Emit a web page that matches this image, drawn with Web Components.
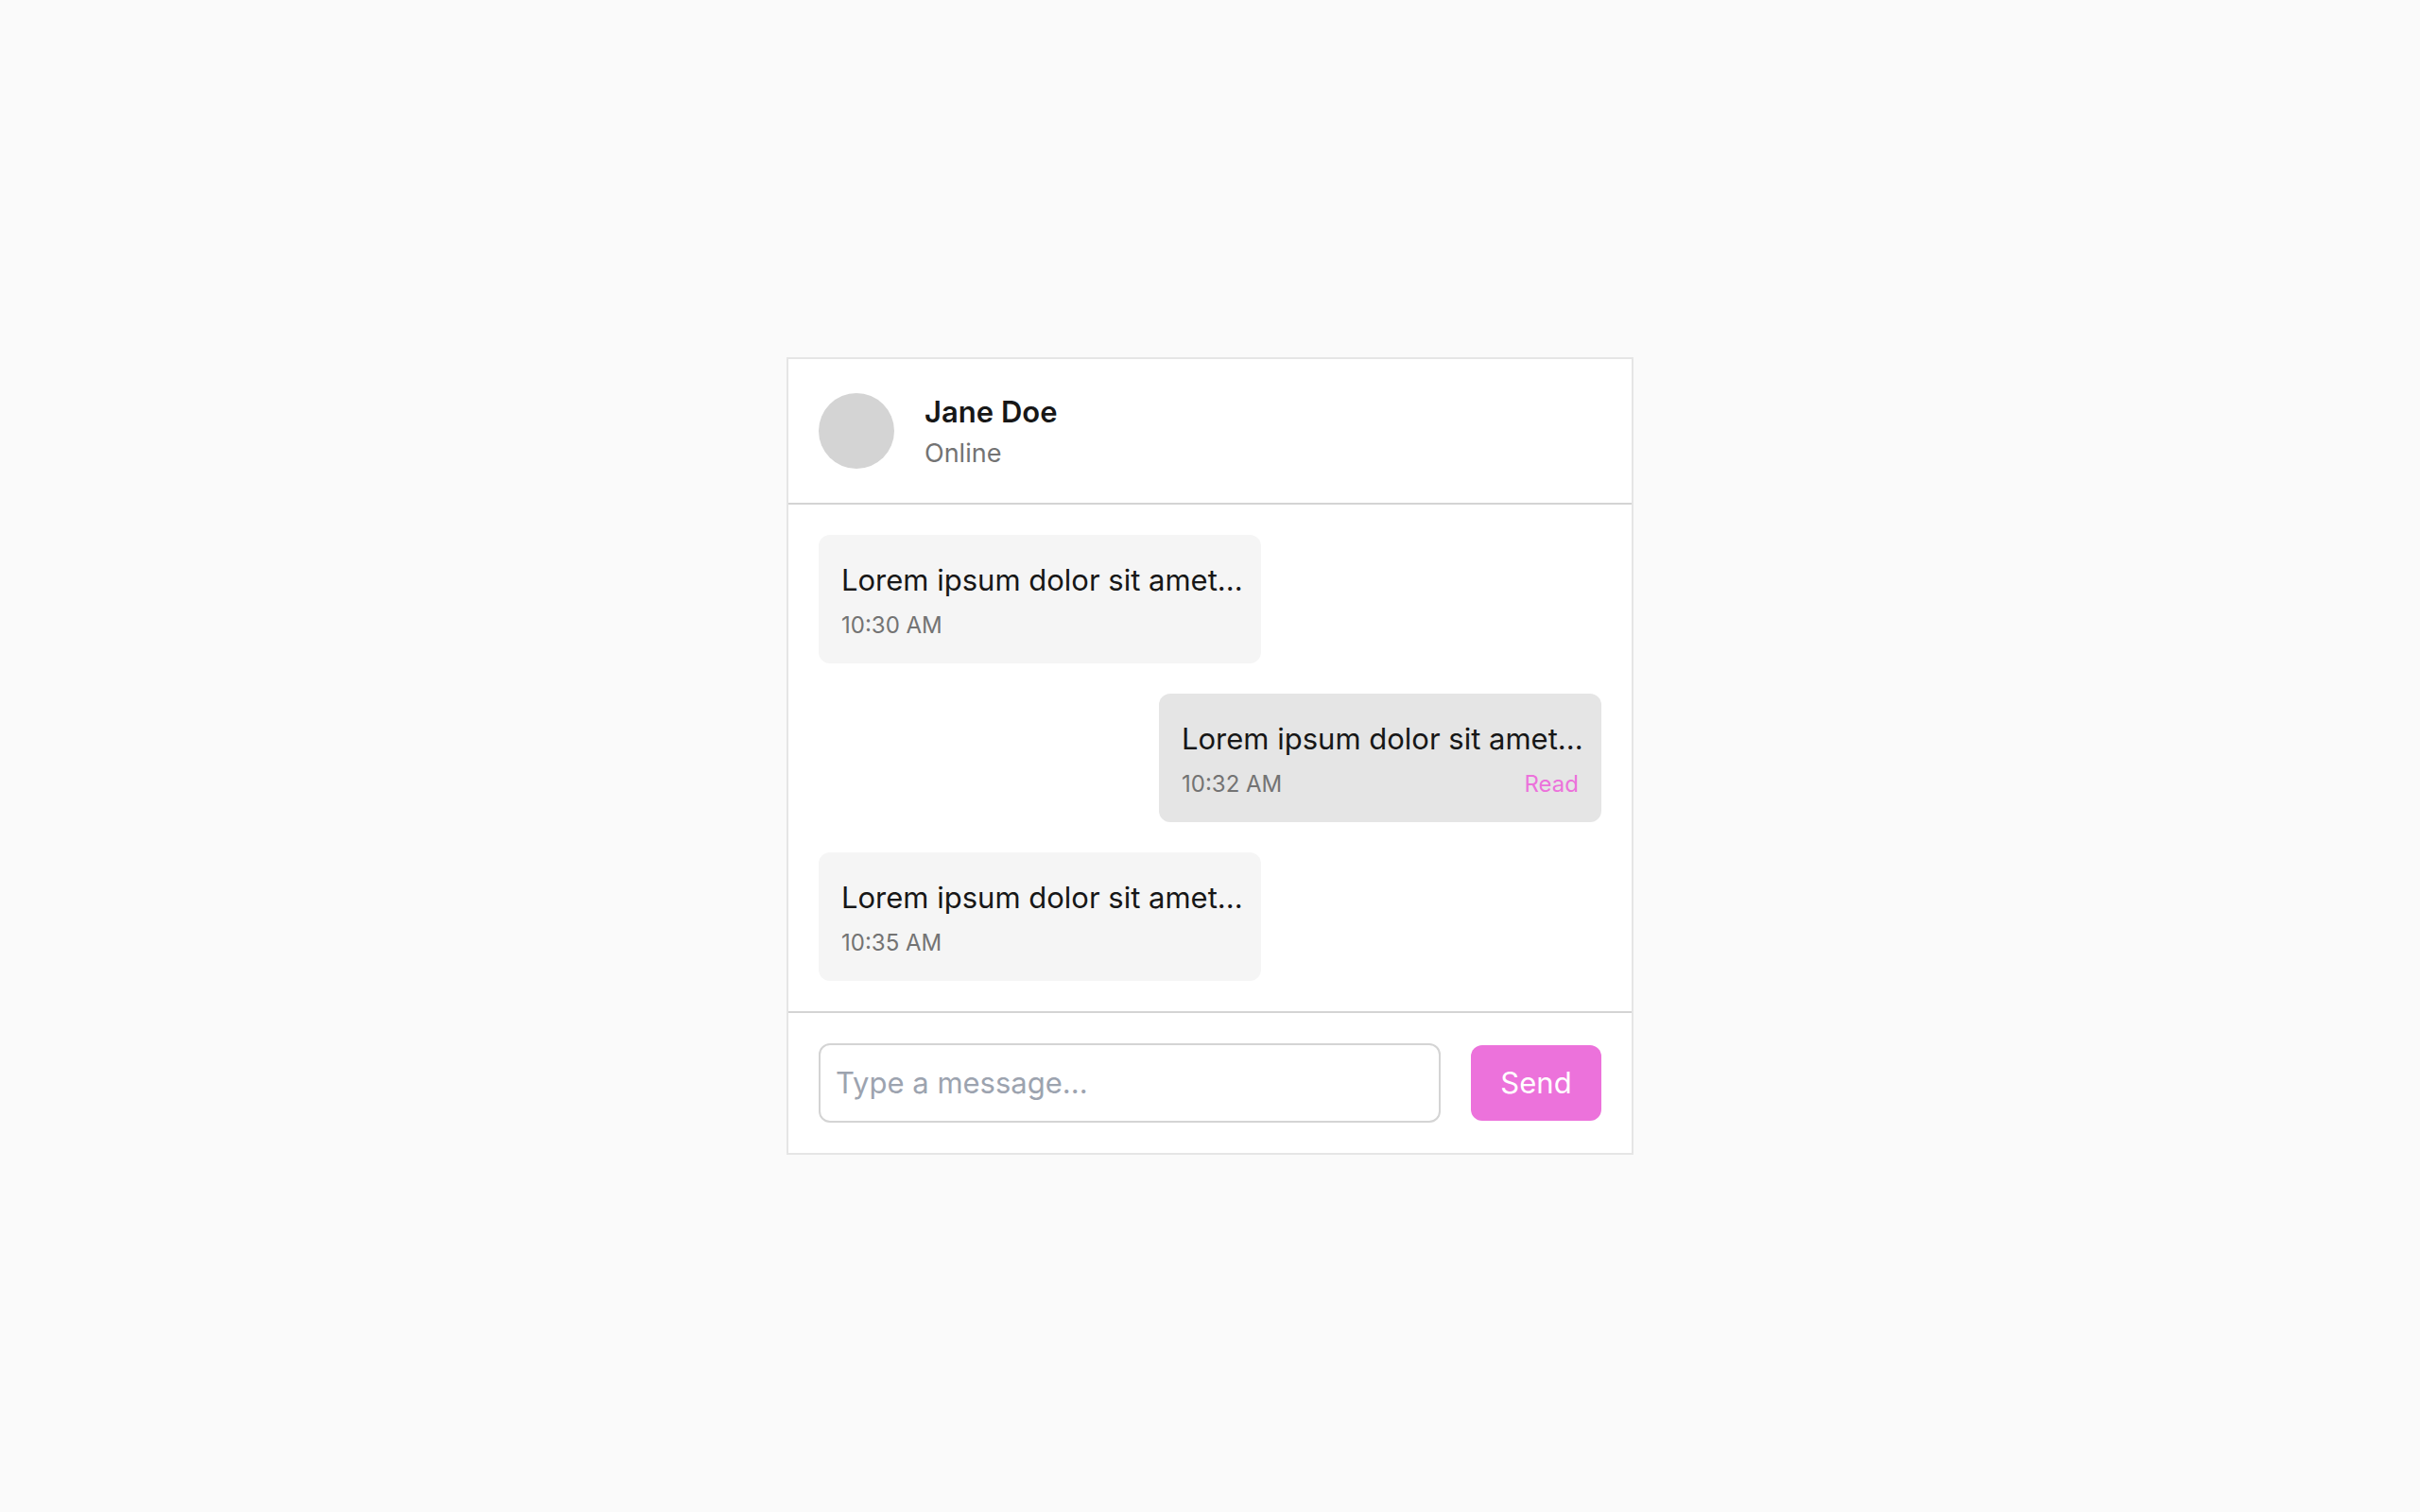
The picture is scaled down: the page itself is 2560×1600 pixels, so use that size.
<!DOCTYPE html>
<html lang="en">
<head>
<meta charset="utf-8">
<title>Chat</title>
<style>
  body {
    margin: 0;
    min-height: 100vh;
    display: flex;
    align-items: center;
    justify-content: center;
    background: #fafafa;
    color: #171717;
    font-family: Inter, "Liberation Sans", sans-serif;
    font-size: 31px;
    line-height: 48px;
    --muted: #737373;
    --line: #d4d4d4;
    --accent: #ec72db;
  }
</style>
</head>
<body>
<chat-card>
  <chat-header slot="header">
    <span slot="name">Jane Doe</span>
    <span slot="status">Online</span>
  </chat-header>
  <chat-message>Lorem ipsum dolor sit amet...<time slot="time">10:30 AM</time></chat-message>
  <chat-message own>Lorem ipsum dolor sit amet...<time slot="time">10:32 AM</time><span slot="receipt">Read</span></chat-message>
  <chat-message>Lorem ipsum dolor sit amet...<time slot="time">10:35 AM</time></chat-message>
  <chat-composer slot="footer"></chat-composer>
</chat-card>
<script>
  const define = (name, markup) => customElements.define(name, class extends HTMLElement {
    constructor() {
      super();
      this.attachShadow({ mode: "open" }).innerHTML = markup;
    }
  });

  define("chat-card", `
    <style>
      :host { display: block; box-sizing: border-box; width: 100%; max-width: 896px; background: #fff; border: 2px solid #e5e5e5; }
      .list { display: flex; flex-direction: column; gap: 32px; padding: 32px; }
    </style>
    <slot name="header"></slot>
    <div class="list" role="log"><slot></slot></div>
    <slot name="footer"></slot>`);

  define("chat-header", `
    <style>
      :host { display: flex; align-items: center; gap: 32px; padding: 32px; border-bottom: 2px solid var(--line); }
      .avatar { width: 80px; height: 80px; border-radius: 50%; background: var(--line); }
      .name { margin: 0; font-size: inherit; font-weight: 600; }
      .status { margin: 0; font-size: 27px; line-height: 40px; color: var(--muted); }
    </style>
    <div class="avatar"></div>
    <div>
      <h2 class="name"><slot name="name"></slot></h2>
      <p class="status"><slot name="status"></slot></p>
    </div>`);

  define("chat-message", `
    <style>
      :host { display: block; box-sizing: border-box; width: 468px; max-width: 100%; align-self: flex-start; padding: 24px; border-radius: 12px; background: #f5f5f5; }
      :host([own]) { align-self: flex-end; background: #e5e5e5; }
      .text { margin: 0; white-space: nowrap; }
      .meta { display: flex; justify-content: space-between; margin-top: 8px; font-size: 24px; line-height: 32px; color: var(--muted); }
      .receipt { color: var(--accent); }
    </style>
    <p class="text"><slot></slot></p>
    <div class="meta"><slot name="time"></slot><span class="receipt"><slot name="receipt"></slot></span></div>`);

  define("chat-composer", `
    <style>
      :host { display: block; padding: 32px; border-top: 2px solid var(--line); }
      form { display: flex; align-items: center; gap: 32px; }
      input, button { font: inherit; border-radius: 12px; margin: 0; }
      input { flex: 1; min-width: 0; box-sizing: content-box; height: 48px; padding: 16px; border: 2px solid var(--line); background: #fff; color: inherit; }
      input::placeholder { color: #9ca3af; opacity: 1; }
      button { width: 138px; padding: 16px 0; border: 0; background: var(--accent); color: #fff; }
    </style>
    <form onsubmit="return false">
      <input type="text" placeholder="Type a message..." aria-label="Message">
      <button type="submit">Send</button>
    </form>`);
</script>
</body>
</html>
